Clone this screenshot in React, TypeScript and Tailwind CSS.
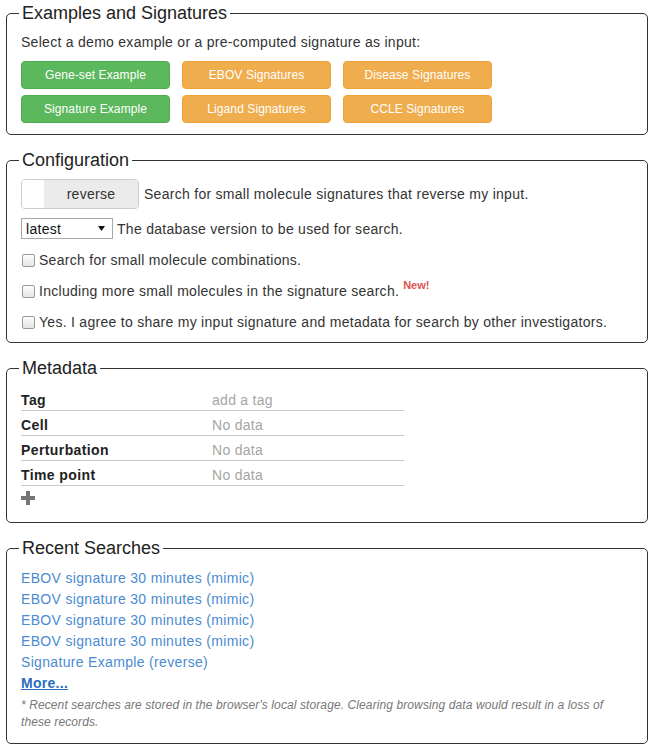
import React from "react";

function Section({
  title,
  className,
  children,
}: {
  title: string;
  className: string;
  children: React.ReactNode;
}) {
  return (
    <fieldset className={"rounded-[5px] border border-[#333] px-[14px] " + className}>
      <legend className="-ml-[2px] px-[3px] text-[18px] leading-[20px] tracking-normal text-[#222]">{title}</legend>
      {children}
    </fieldset>
  );
}

function Checkbox({ children, className }: { children: React.ReactNode; className: string }) {
  return (
    <div className={"flex h-[20px] items-center leading-[20px] " + className}>
      <span className="ml-[1px] mr-[4px] h-[13px] w-[13px] rounded-[2px] border border-[#9a9a9a] bg-gradient-to-b from-[#fdfdfd] to-[#e4e4e4]" />
      <span>{children}</span>
    </div>
  );
}

const examples = [
  { label: "Gene-set Example", color: "green" },
  { label: "EBOV Signatures", color: "orange" },
  { label: "Disease Signatures", color: "orange" },
  { label: "Signature Example", color: "green" },
  { label: "Ligand Signatures", color: "orange" },
  { label: "CCLE Signatures", color: "orange" },
];

const metadata = [
  { key: "Tag", value: "add a tag" },
  { key: "Cell", value: "No data" },
  { key: "Perturbation", value: "No data" },
  { key: "Time point", value: "No data" },
];

const recent = [
  "EBOV signature 30 minutes (mimic)",
  "EBOV signature 30 minutes (mimic)",
  "EBOV signature 30 minutes (mimic)",
  "EBOV signature 30 minutes (mimic)",
  "Signature Example (reverse)",
];

export default function App() {
  return (
    <div className="bg-white pl-[6px] pr-[4px] pt-[3px] pb-[3px] font-['Liberation_Sans',Arial,sans-serif] text-[14px] tracking-[0.28px] text-[#333]">
      <Section title="Examples and Signatures" className="mb-[15px] pt-[9px] pb-[11px]">
        <p className="leading-[20px]">Select a demo example or a pre-computed signature as input:</p>
        <div className="mt-[9px] grid w-max grid-cols-[149px_149px_149px] gap-x-[12px] gap-y-[6px]">
          {examples.map((b) => (
            <button
              key={b.label}
              className={
                "flex h-[28px] items-center justify-center rounded-[4px] border text-[12px] tracking-[0.1px] text-white " +
                (b.color === "green"
                  ? "border-[#4cae4c] bg-[#5cb85c]"
                  : "border-[#eea236] bg-[#f0ad4e]")
              }
            >
              {b.label}
            </button>
          ))}
        </div>
      </Section>

      <Section title="Configuration" className="mb-[15px] pt-[9px] pb-[10px]">
        <div className="flex items-center">
          <div className="flex h-[30px] w-[118px] overflow-hidden rounded-[4px] border border-[#ccc]">
            <span className="w-[22px] bg-white" />
            <span className="flex flex-1 items-center justify-center bg-[#ebebeb]">reverse</span>
          </div>
          <span className="ml-[5px] leading-[20px]">Search for small molecule signatures that reverse my input.</span>
        </div>
        <div className="mt-[9px] flex items-center">
          <div className="flex h-[21px] w-[92px] items-center justify-between border border-[#a9a9a9] bg-white pl-[4px] pr-[7px]">
            <span className="leading-[18px] text-[#111]">latest</span>
            <svg width="7" height="5" viewBox="0 0 7 5">
              <path d="M0 0h7L3.5 5z" fill="#111" />
            </svg>
          </div>
          <span className="ml-[4px] leading-[20px]">The database version to be used for search.</span>
        </div>
        <Checkbox className="mt-[11px]">Search for small molecule combinations.</Checkbox>
        <Checkbox className="mt-[11px]">
          Including more small molecules in the signature search.
          <sup className="relative -top-[7px] ml-[4px] text-[11px] font-bold leading-[0] tracking-normal text-[#d9534f] align-baseline">
            New!
          </sup>
        </Checkbox>
        <Checkbox className="mt-[11px]">
          Yes. I agree to share my input signature and metadata for search by other investigators.
        </Checkbox>
      </Section>

      <Section title="Metadata" className="mb-[15px] pt-[8px] pb-[17px]">
        <div className="w-[383px]">
          {metadata.map((m) => (
            <div key={m.key} className="flex h-[25px] border-b border-[#c8c8c8] pt-[4px] leading-[20px]">
              <span className="w-[191px] font-bold tracking-[0.4px] text-[#222]">{m.key}</span>
              <span className="text-[#a5a5a5]">{m.value}</span>
            </div>
          ))}
        </div>
        <svg className="mt-[5px]" width="14" height="14" viewBox="0 0 14 14">
          <path d="M5 0h4v5h5v4H9v5H5V9H0V5h5z" fill="#777" />
        </svg>
      </Section>

      <Section title="Recent Searches" className="pt-[10px] pb-[12px]">
        <ul className="leading-[21px]">
          {recent.map((r, i) => (
            <li key={i}>
              <a className="tracking-[0.33px] text-[#4a8bd2]">{r}</a>
            </li>
          ))}
          <li>
            <a className="font-bold text-[#2a6ebb] underline">More...</a>
          </li>
        </ul>
        <p className="mt-[3px] text-[12px] italic leading-[17px] tracking-[0.1px] text-[#777]">
          * Recent searches are stored in the browser's local storage. Clearing browsing data would result in a loss of
          these records.
        </p>
      </Section>
    </div>
  );
}
